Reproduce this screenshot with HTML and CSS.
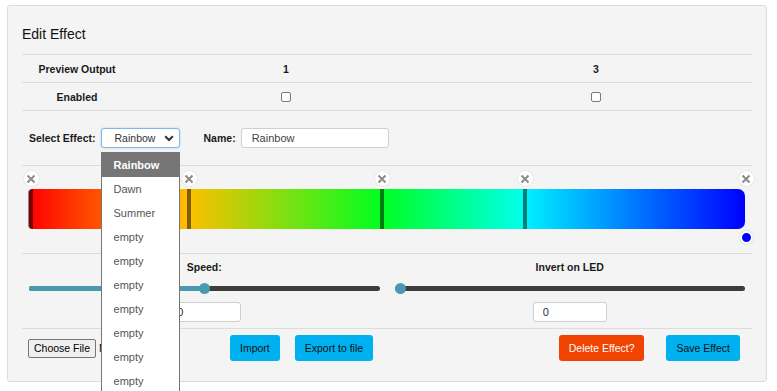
FILE: index.html
```html
<!DOCTYPE html>
<html>
<head>
<meta charset="utf-8">
<title>Edit Effect</title>
<link rel="stylesheet" href="styles.css">
</head>
<body>
<div class="panel">
  <h2 class="title">Edit Effect</h2>

  <div class="trow">
    <div class="cell">Preview Output</div>
    <div class="cell">1</div>
    <div class="cell">3</div>
  </div>
  <div class="trow">
    <div class="cell">Enabled</div>
    <div class="cell"><input type="checkbox" class="cb"></div>
    <div class="cell"><input type="checkbox" class="cb"></div>
  </div>

  <div class="form-row">
    <span class="lbl">Select Effect:</span>
    <div class="select-wrap">
      <div class="select">
        <span>Rainbow</span>
        <svg class="chev" width="10" height="7" viewBox="0 0 10 7"><path d="M1.2 1.3 L5 5 L8.8 1.3" fill="none" stroke="#333" stroke-width="2"/></svg>
      </div>
      <ul class="options">
        <li class="opt sel">Rainbow</li>
        <li class="opt">Dawn</li>
        <li class="opt">Summer</li>
        <li class="opt">empty</li>
        <li class="opt">empty</li>
        <li class="opt">empty</li>
        <li class="opt">empty</li>
        <li class="opt">empty</li>
        <li class="opt">empty</li>
        <li class="opt">empty</li>
      </ul>
    </div>
    <span class="lbl name-lbl">Name:</span>
    <input class="text-in" type="text" value="Rainbow">
  </div>

  <div class="grad-sec">
    <div class="bar">
      <span class="marker" style="left:0px;background:#7d0000"></span>
      <span class="marker" style="left:158px;background:#7f5e00"></span>
      <span class="marker" style="left:351px;background:#007a12"></span>
      <span class="marker" style="left:494px;background:#007f78"></span>

      <span class="handle" style="left:2px"><svg width="10" height="10" viewBox="0 0 10 10"><path d="M1.5 1.5 L8.5 8.5 M8.5 1.5 L1.5 8.5" stroke="#8c8c8c" stroke-width="2"/></svg></span>
      <span class="handle" style="left:160px"><svg width="10" height="10" viewBox="0 0 10 10"><path d="M1.5 1.5 L8.5 8.5 M8.5 1.5 L1.5 8.5" stroke="#8c8c8c" stroke-width="2"/></svg></span>
      <span class="handle" style="left:353px"><svg width="10" height="10" viewBox="0 0 10 10"><path d="M1.5 1.5 L8.5 8.5 M8.5 1.5 L1.5 8.5" stroke="#8c8c8c" stroke-width="2"/></svg></span>
      <span class="handle" style="left:496px"><svg width="10" height="10" viewBox="0 0 10 10"><path d="M1.5 1.5 L8.5 8.5 M8.5 1.5 L1.5 8.5" stroke="#8c8c8c" stroke-width="2"/></svg></span>
      <span class="handle" style="left:717px"><svg width="10" height="10" viewBox="0 0 10 10"><path d="M1.5 1.5 L8.5 8.5 M8.5 1.5 L1.5 8.5" stroke="#8c8c8c" stroke-width="2"/></svg></span>

      <span class="dot" style="left:717px"></span>
    </div>
  </div>

  <div class="sliders">
    <div class="sl-col">
      <div class="sl-label">Speed:</div>
      <div class="slider">
        <div class="track"></div>
        <div class="fill" style="width:50%"></div>
        <div class="thumb" style="left:calc(50% - 5.5px)"></div>
      </div>
      <input class="num" type="text" value="0">
    </div>
    <div class="sl-col">
      <div class="sl-label">Invert on LED</div>
      <div class="slider">
        <div class="track"></div>
        <div class="fill" style="width:0%"></div>
        <div class="thumb" style="left:0px"></div>
      </div>
      <input class="num" type="text" value="0">
    </div>
  </div>

  <div class="actions">
    <div class="file">
      <span class="file-btn">Choose File</span>
      <span class="file-name">No file chosen</span>
    </div>
    <button class="btn blue">Import</button>
    <button class="btn blue export">Export to file</button>
    <button class="btn red">Delete Effect?</button>
    <button class="btn blue save">Save Effect</button>
  </div>
</div>
</body>
</html>
```

FILE: styles.css
```css
html {
  height: 100%;
}

body {
  margin: 0;
  min-height: 100%;
  box-sizing: border-box;
  font-family: "Liberation Sans", Arial, sans-serif;
  font-size: 10.5px;
  color: #1a1a1a;
  background: #fff;
  padding: 5px 10px 0 7px;
}

.panel {
  background: #f4f4f4;
  border: 1px solid #dcdcdc;
  border-radius: 3px;
  padding: 0 14px 20px;
}

.title {
  margin: 0;
  font-size: 14px;
  font-weight: normal;
  line-height: 16px;
  padding: 20px 0 12px;
  border-bottom: 1px solid #dcdcdc;
  color: #111;
}

.trow {
  display: grid;
  grid-template-columns: 110px 308px 1fr;
  height: 27px;
  align-items: center;
  border-bottom: 1px solid #dcdcdc;
  font-weight: bold;
}

.cell {
  text-align: center;
  display: flex;
  justify-content: center;
  align-items: center;
}

.cb {
  appearance: none;
  -webkit-appearance: none;
  width: 10px;
  height: 10px;
  margin: 0;
  border: 1px solid #7a7a7a;
  border-radius: 2px;
  background: #fff;
  box-sizing: border-box;
}

.form-row {
  display: flex;
  align-items: center;
  padding: 17px 7px;
  border-bottom: 1px solid #dcdcdc;
}

.lbl {
  font-weight: bold;
  margin-right: 5px;
}

.name-lbl {
  margin-left: 24px;
  margin-right: 5px;
}

.select-wrap {
  position: relative;
  width: 79px;
  height: 20px;
}

.select {
  box-sizing: border-box;
  height: 20px;
  width: 79px;
  border: 1px solid #80b6ec;
  border-radius: 3px;
  background: #fff;
  box-shadow: 0 0 2px rgba(102, 175, 233, 0.5);
  display: flex;
  align-items: center;
  padding: 0 5px 0 13px;
  color: #333;
}

.select span {
  flex: 1;
}

.chev {
  display: block;
}

.options {
  position: absolute;
  left: 0;
  top: 24px;
  width: 77px;
  height: 238px;
  overflow: hidden;
  margin: 0;
  padding: 0;
  list-style: none;
  background: #fff;
  border: 1px solid #767676;
  border-bottom: 0;
  box-sizing: content-box;
  z-index: 10;
}

.opt {
  height: 24px;
  line-height: 24px;
  padding-left: 12px;
  color: #555;
  font-size: 11px;
}

.opt.sel {
  background: #767676;
  color: #fff;
  font-weight: bold;
}

.text-in {
  box-sizing: border-box;
  width: 148px;
  height: 20px;
  border: 1px solid #cfcfcf;
  border-radius: 3px;
  background: #fff;
  padding: 0 10px;
  font-family: inherit;
  font-size: 11px;
  color: #444;
  margin: 0;
}

.grad-sec {
  padding: 23px 7px 24px;
  border-bottom: 1px solid #dcdcdc;
}

.bar {
  position: relative;
  height: 40px;
  border-radius: 5px 7px 7px 5px;
  background: linear-gradient(to right,
    #ff0000 0%,
    #ffbf00 22.2%,
    #00ff20 49.2%,
    #00ffee 69.2%,
    #00f0ff 69.4%,
    #0000ff 100%);
}

.marker {
  position: absolute;
  top: 0;
  bottom: 0;
  width: 4px;
}

.marker:first-child {
  border-radius: 5px 0 0 5px;
  box-shadow: -1px 0 0 #888;
}

.handle {
  position: absolute;
  top: -18px;
  width: 15px;
  height: 15px;
  margin-left: -7.5px;
  border-radius: 50%;
  background: #fff;
  box-shadow: 0 0 2px rgba(0, 0, 0, 0.15);
  display: flex;
  align-items: center;
  justify-content: center;
}

.handle svg {
  display: block;
}

.dot {
  position: absolute;
  top: 42px;
  width: 9px;
  height: 9px;
  margin-left: -6.5px;
  border-radius: 50%;
  background: #0000ff;
  border: 2px solid #fff;
  box-shadow: 0 0 2px rgba(0, 0, 0, 0.2);
}

.sliders {
  display: grid;
  grid-template-columns: 1fr 1fr;
  column-gap: 15px;
  padding: 0 7px 6px;
  border-bottom: 1px solid #dcdcdc;
}

.sl-col {
  display: flex;
  flex-direction: column;
  align-items: center;
}

.sl-label {
  font-weight: bold;
  line-height: 14px;
  padding-top: 6px;
}

.slider {
  position: relative;
  align-self: stretch;
  height: 11px;
  margin-top: 9px;
}

.track {
  position: absolute;
  left: 0;
  right: 0;
  top: 3px;
  height: 5px;
  border-radius: 3px;
  background: #3c3c3c;
}

.fill {
  position: absolute;
  left: 0;
  top: 3px;
  height: 5px;
  border-radius: 3px;
  background: #4a9aaf;
}

.thumb {
  position: absolute;
  top: 0;
  width: 11px;
  height: 11px;
  border-radius: 50%;
  background: #4a9aaf;
}

.num {
  box-sizing: border-box;
  width: 74px;
  height: 20px;
  margin: 8px 0 0;
  border: 1px solid #cfcfcf;
  border-radius: 3px;
  background: #fff;
  padding: 0 9px;
  font-family: inherit;
  font-size: 11px;
  color: #333;
}

.actions {
  display: flex;
  align-items: center;
  padding: 6px 12px 0 6px;
}

.file {
  flex: 0 0 202px;
  display: flex;
  align-items: center;
  overflow: hidden;
  white-space: nowrap;
}

.file-btn {
  box-sizing: border-box;
  height: 19px;
  line-height: 17px;
  padding: 0 5px;
  border: 1px solid #767676;
  border-radius: 2px;
  background: #efefef;
  color: #000;
  font-size: 10.5px;
}

.file-name {
  margin-left: 3px;
  color: #000;
}

.btn {
  height: 26px;
  border: none;
  border-radius: 3px;
  padding: 0 10px;
  font-family: inherit;
  font-size: 10.5px;
  cursor: pointer;
}

.btn.blue {
  background: #00b1f0;
  color: #111;
}

.btn.red {
  background: #f04300;
  color: #fff;
  margin-left: auto;
}

.export {
  margin-left: 15px;
}

.save {
  margin-left: 22px;
}
```
